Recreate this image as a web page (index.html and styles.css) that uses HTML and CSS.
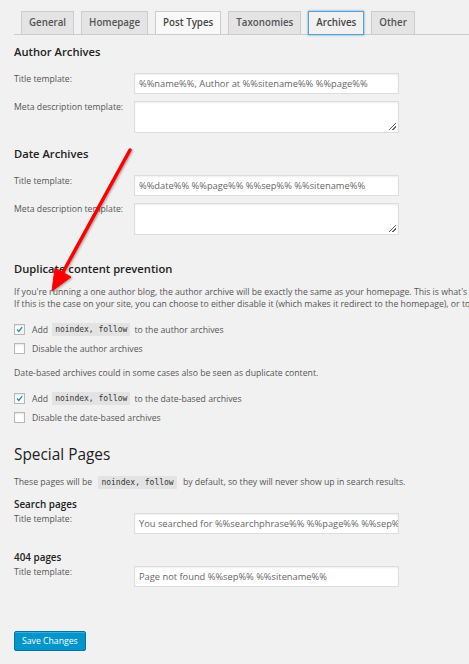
FILE: index.html
```html
<!DOCTYPE html>
<html lang="en">
<head>
    <meta charset="UTF-8">
    <meta name="viewport" content="width=device-width, initial-scale=1.0">
    <title>Titles &amp; Metas - Archives</title>
    <link rel="stylesheet" href="styles.css">
</head>
<body>
    <div class="wrap">
        <div class="tabs">
            <a class="tab">General</a>
            <a class="tab">Homepage</a>
            <a class="tab tab-hover">Post Types</a>
            <a class="tab">Taxonomies</a>
            <a class="tab tab-active">Archives</a>
            <a class="tab">Other</a>
        </div>

        <h3 class="first">Author Archives</h3>
        <div class="row">
            <label>Title template:</label>
            <div class="field">%%name%%, Author at %%sitename%% %%page%%</div>
        </div>
        <div class="row">
            <label>Meta description template:</label>
            <div class="area"><span class="grip"></span></div>
        </div>

        <h3>Date Archives</h3>
        <div class="row">
            <label>Title template:</label>
            <div class="field">%%date%% %%page%% %%sep%% %%sitename%%</div>
        </div>
        <div class="row">
            <label>Meta description template:</label>
            <div class="area"><span class="grip"></span></div>
        </div>

        <h3 class="spaced">Duplicate content prevention</h3>
        <p class="desc">If you're running a one author blog, the author archive will be exactly the same as your homepage. This is what's called a duplicate content problem.<br>If this is the case on your site, you can choose to either disable it (which makes it redirect to the homepage), or to add noindex,follow to it so it doesn't show up in the search results.</p>

        <div class="checks">
            <div class="check"><span class="box on"><svg viewBox="0 0 11 11"><path d="M2.5 5.5 L4.6 7.8 L8.8 2.6" /></svg></span>Add <code>noindex, follow</code> to the author archives</div>
            <div class="check"><span class="box"></span>Disable the author archives</div>
        </div>

        <p class="note">Date-based archives could in some cases also be seen as duplicate content.</p>

        <div class="checks">
            <div class="check"><span class="box on"><svg viewBox="0 0 11 11"><path d="M2.5 5.5 L4.6 7.8 L8.8 2.6" /></svg></span>Add <code>noindex, follow</code> to the date-based archives</div>
            <div class="check"><span class="box"></span>Disable the date-based archives</div>
        </div>

        <h2>Special Pages</h2>
        <p class="note intro">These pages will be <code>noindex, follow</code> by default, so they will never show up in search results.</p>

        <h4>Search pages</h4>
        <div class="row">
            <label>Title template:</label>
            <div class="field">You searched for %%searchphrase%% %%page%% %%sep%% %%sitename%%</div>
        </div>

        <h4 class="gap">404 pages</h4>
        <div class="row">
            <label>Title template:</label>
            <div class="field">Page not found %%sep%% %%sitename%%</div>
        </div>

        <button class="save">Save Changes</button>
    </div>

    <!-- annotation arrow drawn over the form -->
    <svg class="arrow" width="469" height="664" viewBox="0 0 469 664">
        <defs>
            <filter id="soft" x="-20%" y="-20%" width="140%" height="140%">
                <feDropShadow dx="1" dy="1" stdDeviation="1" flood-color="#000" flood-opacity="0.35"/>
            </filter>
        </defs>
        <g filter="url(#soft)" fill="#f00" stroke="#f00">
            <line x1="130" y1="150" x2="62" y2="274" stroke-width="3.5" stroke-linecap="round"/>
            <polygon points="52,291 55,268 71,277" stroke-width="1" stroke-linejoin="round"/>
        </g>
    </svg>
</body>
</html>
```

FILE: styles.css
```css
html, body {
    overflow: hidden;
}
body {
    margin: 0;
    background: #f1f1f1;
    font-family: "Open Sans", "Noto Sans", sans-serif;
    font-size: 8.7px;
    color: #555;
}
.wrap {
    padding: 11px 0 0 14px;
}
.tabs {
    display: flex;
    gap: 7px;
    padding-left: 7px;
    border-bottom: 1px solid #ccc;
    width: 800px;
}
.tab {
    display: block;
    height: 22px;
    line-height: 22px;
    padding: 0 7px;
    margin-bottom: -1px;
    border: 1px solid #ccc;
    background: #e4e4e4;
    font-size: 9.75px;
    font-weight: 600;
    color: #555;
}
.tab-hover {
    background: #f9f9f9;
    color: #464646;
}
.tab-active {
    background: #f1f1f1;
    border-color: #5b9dd9;
    box-shadow: 0 0 2px rgba(30, 140, 190, 0.8);
    color: #464646;
}
h2, h3, h4 {
    margin: 0;
    color: #222;
}
h3 {
    font-size: 11.2px;
    font-weight: 600;
    line-height: 16px;
    margin-top: 13px;
}
h3.first {
    margin-top: 9px;
}
h3.spaced {
    margin-top: 26px;
}
h2 {
    font-size: 15.4px;
    font-weight: 400;
    line-height: 22px;
    margin-top: 17px;
}
h4 {
    font-size: 9.9px;
    font-weight: 600;
    line-height: 14px;
    margin-top: 7px;
}
h4.gap {
    margin-top: 16px;
}
.row {
    display: flex;
    margin-top: 7px;
}
h3 + .row {
    margin-top: 13px;
}
h4 + .row {
    margin-top: 2px;
}
.row label {
    width: 120px;
    flex: none;
    line-height: 12px;
}
.field {
    box-sizing: border-box;
    width: 265px;
    height: 21px;
    padding: 0 4px;
    background: #fff;
    border: 1px solid #ddd;
    box-shadow: inset 0 1px 2px rgba(0, 0, 0, 0.07);
    font-size: 9.3px;
    line-height: 19px;
    color: #666;
    white-space: nowrap;
    overflow: hidden;
}
.area {
    position: relative;
    box-sizing: border-box;
    width: 265px;
    height: 32px;
    background: #fff;
    border: 1px solid #ddd;
    box-shadow: inset 0 1px 2px rgba(0, 0, 0, 0.07);
}
.grip {
    position: absolute;
    right: 2px;
    bottom: 2px;
    width: 7px;
    height: 7px;
    background: linear-gradient(135deg, transparent 45%, #666 45%, #666 55%, transparent 55%, transparent 70%, #666 70%, #666 80%, transparent 80%);
}
p {
    margin: 0;
    line-height: 12px;
}
.desc {
    margin-top: 9px;
    white-space: nowrap;
}
.checks {
    margin-top: 10px;
}
.check {
    display: flex;
    align-items: center;
    height: 19px;
    white-space: nowrap;
}
.box {
    box-sizing: border-box;
    width: 11px;
    height: 11px;
    margin-right: 7px;
    border: 1px solid #b4b9be;
    background: #fff;
    box-shadow: inset 0 1px 2px rgba(0, 0, 0, 0.1);
    flex: none;
}
.box svg {
    display: block;
    width: 9px;
    height: 9px;
    fill: none;
    stroke: #1e8cbe;
    stroke-width: 1.6;
}
code {
    display: inline-block;
    margin: 0 4px;
    padding: 0 3px;
    background: #e3e3e3;
    font-family: "DejaVu Sans Mono", "Liberation Mono", monospace;
    font-size: 8px;
    line-height: 13px;
    color: #333;
}
.note {
    margin-top: 9px;
}
.intro {
    margin-top: 8px;
    line-height: 16px;
}
.save {
    display: block;
    margin-top: 44px;
    height: 20px;
    padding: 0 7px;
    background: #0096cc;
    border: 1px solid #0073aa;
    border-radius: 2px;
    box-shadow: inset 0 1px 0 rgba(120, 200, 230, 0.5);
    color: #fff;
    font-family: "Open Sans", sans-serif;
    font-size: 8.7px;
}
.arrow {
    position: absolute;
    left: 0;
    top: 0;
    pointer-events: none;
}
```
